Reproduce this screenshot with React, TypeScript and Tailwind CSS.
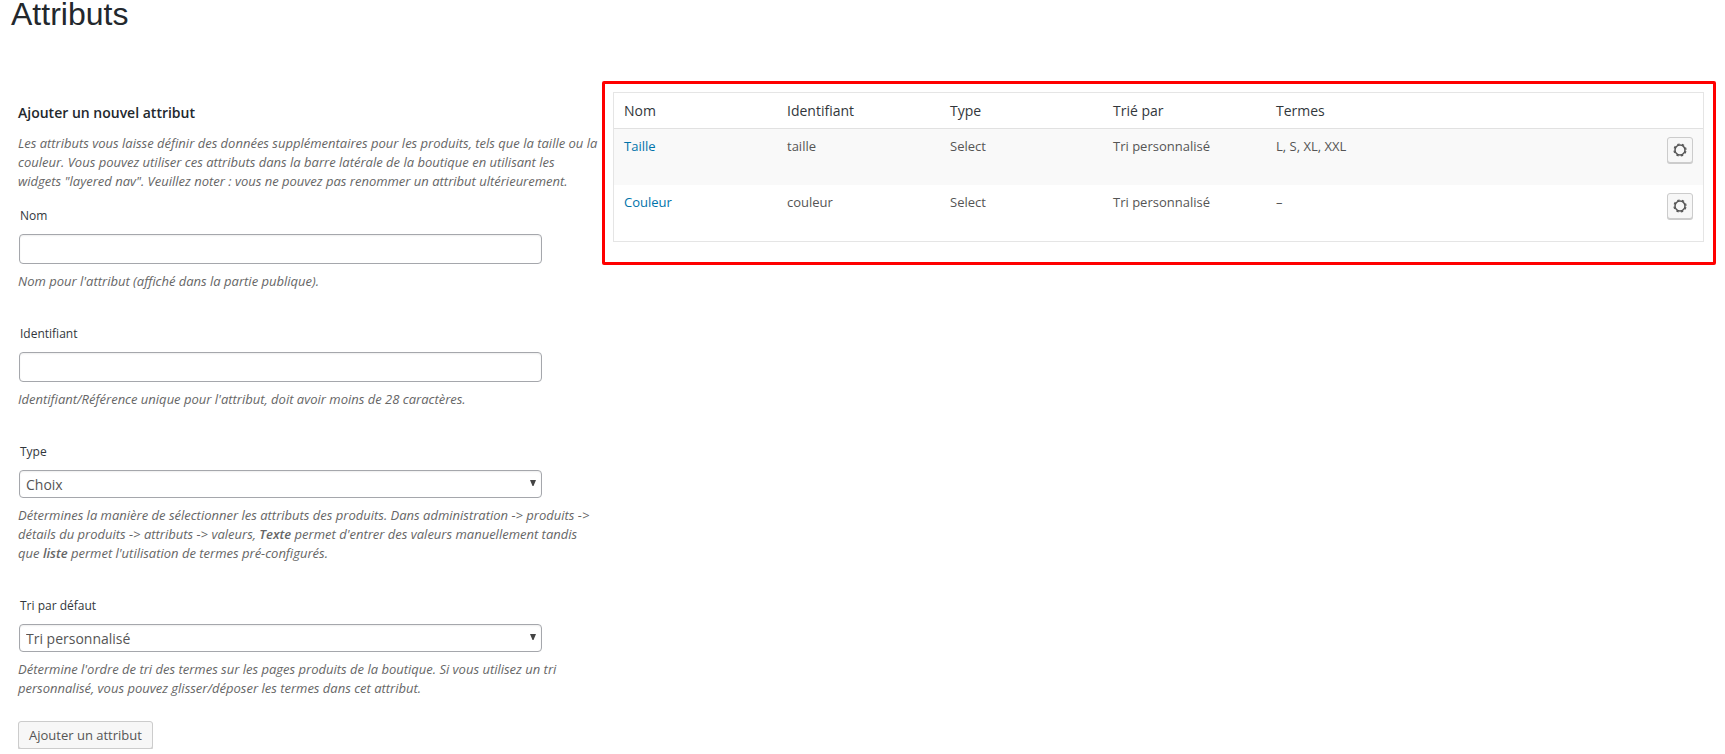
import { FC, ReactNode } from "react"

const COLUMNS = ["Nom", "Identifiant", "Type", "Trié par", "Termes"]

const ATTRIBUTES = [
  { name: "Taille", slug: "taille", type: "Select", orderBy: "Tri personnalisé", terms: "L, S, XL, XXL" },
  { name: "Couleur", slug: "couleur", type: "Select", orderBy: "Tri personnalisé", terms: "–" },
]

const CONTROL =
  "block w-full rounded border border-[#a5a7ac] bg-white px-1.5 text-sm text-[#555] shadow-[inset_0_1px_2px_rgba(0,0,0,0.07)]"

const Field: FC<{ id: string; label: string; help: ReactNode; children: ReactNode }> = ({
  id,
  label,
  help,
  children,
}) => (
  <div>
    <label htmlFor={id} className="block pl-0.5 text-xs leading-4 text-[#32373c]">
      {label}
    </label>
    <div className="relative ml-px mt-2.5 w-[523px] max-w-full">{children}</div>
    <p className="mt-2 text-[13px] italic leading-[19px] text-[#666]">{help}</p>
  </div>
)

const SelectBox: FC<{ id: string; options: string[] }> = ({ id, options }) => (
  <>
    <select id={id} className={`${CONTROL} h-7 appearance-none pt-0.5`}>
      {options.map((it) => (
        <option key={it}>{it}</option>
      ))}
    </select>
    <svg
      className="pointer-events-none absolute right-1.5 top-2.5 h-1.5 w-1.5 fill-[#444]"
      viewBox="0 0 6 6"
      aria-hidden="true"
    >
      <path d="M0 0h6L3.5 6h-1z" />
    </svg>
  </>
)

const GearIcon: FC = () => (
  <svg className="h-4 w-4" viewBox="0 0 16 16" fill="none" stroke="#555" aria-hidden="true">
    <circle cx="8" cy="8" r="5" strokeWidth="1.5" />
    <circle cx="8" cy="8" r="6" strokeWidth="1.2" strokeDasharray="2.4 2.312" strokeDashoffset="-1.2" />
  </svg>
)

const AttributeForm: FC = () => (
  <form className="pl-[18px] pr-0.5 pt-[22px]" onSubmit={(e) => e.preventDefault()}>
    <h2 className="text-sm font-semibold leading-5 text-[#23282d]">Ajouter un nouvel attribut</h2>
    <p className="mt-[11px] text-[13px] italic leading-[19px] text-[#666]">
      Les attributs vous laisse définir des données supplémentaires pour les produits, tels que la taille ou la
      couleur. Vous pouvez utiliser ces attributs dans la barre latérale de la boutique en utilisant les widgets
      "layered nav". Veuillez noter : vous ne pouvez pas renommer un attribut ultérieurement.
    </p>
    <div className="mt-[17px] flex flex-col gap-[35px]">
      <Field id="name" label="Nom" help="Nom pour l'attribut (affiché dans la partie publique).">
        <input id="name" type="text" className={`${CONTROL} h-[30px]`} />
      </Field>
      <Field
        id="slug"
        label="Identifiant"
        help="Identifiant/Référence unique pour l'attribut, doit avoir moins de 28 caractères."
      >
        <input id="slug" type="text" className={`${CONTROL} h-[30px]`} />
      </Field>
      <Field
        id="type"
        label="Type"
        help={
          <>
            Détermines la manière de sélectionner les attributs des produits. Dans administration -&gt; produits
            -&gt; détails du produits -&gt; attributs -&gt; valeurs,{" "}
            <strong className="font-semibold">Texte</strong> permet d'entrer des valeurs manuellement tandis que{" "}
            <strong className="font-semibold">liste</strong> permet l'utilisation de termes pré-configurés.
          </>
        }
      >
        <SelectBox id="type" options={["Choix", "Texte"]} />
      </Field>
      <Field
        id="orderby"
        label="Tri par défaut"
        help="Détermine l'ordre de tri des termes sur les pages produits de la boutique. Si vous utilisez un tri personnalisé, vous pouvez glisser/déposer les termes dans cet attribut."
      >
        <SelectBox id="orderby" options={["Tri personnalisé", "Nom"]} />
      </Field>
    </div>
    <button
      type="submit"
      className="mt-[23px] h-7 rounded-[3px] border border-[#ccc] bg-[#f7f7f7] px-2.5 text-[13px] leading-[26px] text-[#555] shadow-[0_1px_0_#ccc]"
    >
      Ajouter un attribut
    </button>
  </form>
)

const AttributeTable: FC = () => (
  <div className="h-[184px] rounded-[2px] border-[3px] border-[#f00] p-2 pr-[9px]">
    <table className="w-full table-fixed border-separate border-spacing-0 border border-[#e5e5e5] text-left">
      <thead>
        <tr className="text-sm leading-[19px] text-[#32373c]">
          {COLUMNS.map((name) => (
            <th key={name} className="w-[163px] border-b border-[#e1e1e1] px-2.5 py-2 font-normal">
              {name}
            </th>
          ))}
          <td className="border-b border-[#e1e1e1]" />
        </tr>
      </thead>
      <tbody>
        {ATTRIBUTES.map(({ name, slug, type, orderBy, terms }) => (
          <tr key={slug} className="h-14 align-top text-[13px] leading-[19px] text-[#555] odd:bg-[#f9f9f9]">
            <td className="px-2.5 py-2">
              <a href={`#${slug}`} className="text-[#0073aa]">
                {name}
              </a>
            </td>
            <td className="px-2.5 py-2">{slug}</td>
            <td className="px-2.5 py-2">{type}</td>
            <td className="px-2.5 py-2">{orderBy}</td>
            <td className="px-2.5 py-2">{terms}</td>
            <td className="px-2.5 py-2">
              <button
                type="button"
                aria-label={`Configurer ${name}`}
                className="ml-auto flex h-[26px] w-[26px] items-start justify-center rounded-[3px] border border-[#ccc] bg-[#f7f7f7] pt-1 shadow-[0_1px_0_#ccc]"
              >
                <GearIcon />
              </button>
            </td>
          </tr>
        ))}
      </tbody>
    </table>
  </div>
)

export default function App() {
  return (
    <main className="bg-white pr-[9px] font-['Open_Sans',sans-serif]">
      <h1 className="mb-[53px] pl-[11px] font-['Liberation_Sans',sans-serif] text-[32px] leading-7 text-[#23282d]">
        Attributs
      </h1>
      <div className="grid grid-cols-[602px_1fr] items-start">
        <AttributeForm />
        <AttributeTable />
      </div>
    </main>
  )
}
